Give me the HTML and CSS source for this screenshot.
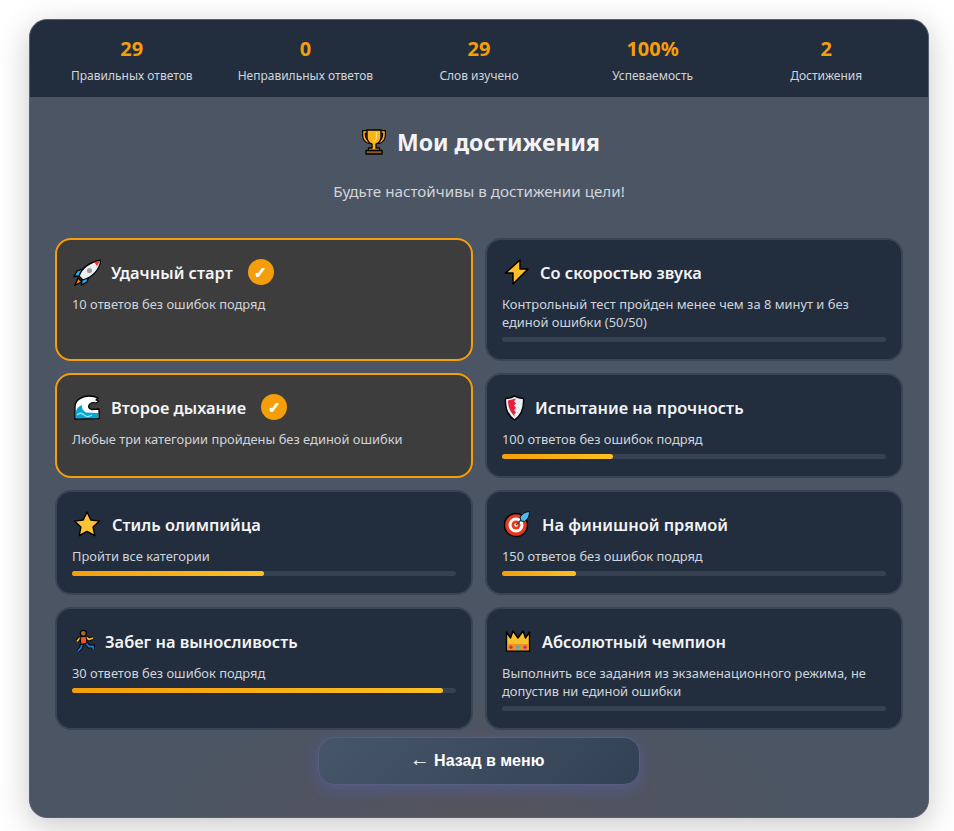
FILE: index.html
```html
<!DOCTYPE html>
<html lang="ru">
<head>
    <meta charset="UTF-8">
    <meta name="viewport" content="width=device-width, initial-scale=1.0">
    <title>Мои достижения</title>
    <link rel="stylesheet" href="styles.css">
</head>
<body>
    <div class="container">
        <div class="stats-bar">
            <div class="stat"><div class="stat-value">29</div><div class="stat-label">Правильных ответов</div></div>
            <div class="stat"><div class="stat-value">0</div><div class="stat-label">Неправильных ответов</div></div>
            <div class="stat"><div class="stat-value">29</div><div class="stat-label">Слов изучено</div></div>
            <div class="stat"><div class="stat-value">100%</div><div class="stat-label">Успеваемость</div></div>
            <div class="stat"><div class="stat-value">2</div><div class="stat-label">Достижения</div></div>
        </div>

        <main class="content">
            <h1 class="page-title">
                <svg class="title-icon" viewBox="0 0 26 26" width="26" height="26">
                    <path d="M7 3H3v3c0 4 2 6.500 6 7.500M19 3h4v3c0 4-2 6.500-6 7.500" fill="none" stroke="#000" stroke-width="3.800"/>
                    <path d="M7 3H3v3c0 4 2 6.500 6 7.500M19 3h4v3c0 4-2 6.500-6 7.500" fill="none" stroke="#f9a825" stroke-width="1.600"/>
                    <path d="M6 1h14v7c0 4-3.500 6.500-5 7.200V19h3.500v2.500h-11V19H11v-3.800C9.500 14.500 6 12 6 8z" fill="#fcb316" stroke="#000" stroke-width="1.300"/>
                    <path d="M15.500 3v5c0 2-1 3.500-2 5" fill="none" stroke="#ffe08a" stroke-width="1.300"/>
                    <path d="M5 21.500h16V25H5z" fill="#8d5a2b" stroke="#000" stroke-width="1.300"/>
                </svg>
                Мои достижения
            </h1>
            <p class="subtitle">Будьте настойчивы в достижении цели!</p>

            <div class="achievements">
                <div class="card completed">
                    <div class="card-head">
                        <svg class="icon" viewBox="0 0 29 28" width="29" height="28">
                            <path d="M6 20l-3 7 7-3z" fill="#f57c00" stroke="#000" stroke-width="1.300"/>
                            <path d="M11 11l-6 2-3 5.500 6-.5zM17 18l-2 6-5.500 3 .5-6z" fill="#1fb0f0" stroke="#000" stroke-width="1.300"/>
                            <path d="M7 18C10 10 18 4 29 2 27 13 20 19 11 22z" fill="#eceff1" stroke="#000" stroke-width="1.300"/>
                            <path d="M21 4.200c2 .6 3.300 2 3.800 4.300L28.200 2.800z" fill="#e53935"/>
                            <circle cx="17.500" cy="12.500" r="2.600" fill="#9e9e9e"/>
                        </svg>
                        <span class="card-title">Удачный старт</span>
                        <span class="check">✓</span>
                    </div>
                    <p class="card-desc">10 ответов без ошибок подряд</p>
                </div>

                <div class="card">
                    <div class="card-head">
                        <svg class="icon" viewBox="0 0 28 28" width="28" height="28">
                            <path d="M18 2L3.500 15H11V26L26 11H18z" fill="#fcbc2c" stroke="#000" stroke-width="1.500" stroke-linejoin="round"/>
                        </svg>
                        <span class="card-title">Со скоростью звука</span>
                    </div>
                    <p class="card-desc">Контрольный тест пройден менее чем за 8 минут и без единой ошибки (50/50)</p>
                    <div class="progress-bar"><div class="progress" style="width: 0%"></div></div>
                </div>

                <div class="card completed">
                    <div class="card-head">
                        <svg class="icon" viewBox="0 0 29 28" width="29" height="28">
                            <path d="M3 26V14C3 7 10 3 17 3c4 0 7 1 9 2l-2 2 3 1-3 2c-3-1-6 0-7 2s0 4 3 4.500l7-.5v9.500z" fill="#fff" stroke="#000" stroke-width="1.300" stroke-linejoin="round"/>
                            <path d="M4 18c1-3 3-5 6-6-.5 3 1 6 4 7.500L26 20v5.300H4z" fill="#05a6d3"/>
                            <path d="M5 22c3-3 5-2 7 0s5 2 8 0" fill="none" stroke="#8ee3f5" stroke-width="1.200"/>
                        </svg>
                        <span class="card-title">Второе дыхание</span>
                        <span class="check">✓</span>
                    </div>
                    <p class="card-desc">Любые три категории пройдены без единой ошибки</p>
                </div>

                <div class="card">
                    <div class="card-head">
                        <svg class="icon" viewBox="0 0 23 28" width="23" height="28">
                            <path d="M12.500 3c3 1.500 6 2.300 9 2.500.5 8-1 16-9 21.500-8-5.500-9.500-13.500-9-21.500 3-.2 6-1 9-2.500z" fill="#eceff1" stroke="#000" stroke-width="1.400"/>
                            <path d="M14 5.500L6 7.500c0 6 2 12 7.500 16.500l-1.500-2.500 2-2-2-2.500 2-2-2-2.500 2-2-2-2z" fill="#e81e3a"/>
                        </svg>
                        <span class="card-title">Испытание на прочность</span>
                    </div>
                    <p class="card-desc">100 ответов без ошибок подряд</p>
                    <div class="progress-bar"><div class="progress" style="width: 29%"></div></div>
                </div>

                <div class="card">
                    <div class="card-head">
                        <svg class="icon" viewBox="0 0 30 28" width="30" height="28">
                            <path d="M15 2l3.800 8 8.700 1.100-6.400 6 1.700 8.600-7.800-4.300-7.800 4.300 1.700-8.600-6.400-6L11.200 10z" fill="#ffc233" stroke="#000" stroke-width="1.400" stroke-linejoin="round"/>
                        </svg>
                        <span class="card-title">Стиль олимпийца</span>
                    </div>
                    <p class="card-desc">Пройти все категории</p>
                    <div class="progress-bar"><div class="progress" style="width: 50%"></div></div>
                </div>

                <div class="card">
                    <div class="card-head">
                        <svg class="icon" viewBox="0 0 30 28" width="30" height="28">
                            <circle cx="14" cy="15" r="11.500" fill="#e53a1e" stroke="#000" stroke-width="1.400"/>
                            <circle cx="14" cy="15" r="7.500" fill="#fff"/>
                            <circle cx="14" cy="15" r="4.500" fill="#e53a1e"/>
                            <circle cx="14" cy="15" r="1.800" fill="#fff"/>
                            <path d="M14 15L21 8" stroke="#37474f" stroke-width="1.400"/>
                            <path d="M18 7c2-3 5-5 9.500-5.500C27.500 6 26 9 22.500 11.500L19 11z" fill="#4fb8ef" stroke="#000" stroke-width=".8"/>
                        </svg>
                        <span class="card-title">На финишной прямой</span>
                    </div>
                    <p class="card-desc">150 ответов без ошибок подряд</p>
                    <div class="progress-bar"><div class="progress" style="width: 19.33%"></div></div>
                </div>

                <div class="card">
                    <div class="card-head">
                        <svg class="icon" viewBox="0 0 23 28" width="23" height="28">
                            <path d="M14 10l3 2.500 4-1.500M8 10.500l-3 4" fill="none" stroke="#000" stroke-width="3.600"/>
                            <path d="M14 10l3 2.500 4-1.500M8 10.500l-3 4" fill="none" stroke="#fbc02d" stroke-width="1.700"/>
                            <path d="M10 17l-1 4-3 3M14 16l3 3.500h4l.5 3" fill="none" stroke="#000" stroke-width="3.800"/>
                            <path d="M10 17l-1 4-3 3M14 16l3 3.500h4l.5 3" fill="none" stroke="#1e78d2" stroke-width="1.900"/>
                            <path d="M8 10l6-1 1 7-6 1.500z" fill="#ef5326" stroke="#000" stroke-width="1"/>
                            <circle cx="11.300" cy="6.300" r="3" fill="#a5672e" stroke="#000" stroke-width="1.200"/>
                        </svg>
                        <span class="card-title">Забег на выносливость</span>
                    </div>
                    <p class="card-desc">30 ответов без ошибок подряд</p>
                    <div class="progress-bar"><div class="progress" style="width: 96.67%"></div></div>
                </div>

                <div class="card">
                    <div class="card-head">
                        <svg class="icon" viewBox="0 0 30 28" width="30" height="28">
                            <path d="M4.500 5l4 6 2.500-7 5 7 5-7 2.500 7 4-6V24h-23z" fill="#fbc02d" stroke="#000" stroke-width="1.400" stroke-linejoin="round"/>
                            <rect x="5.200" y="17" width="21.600" height="6.300" fill="#e8951c"/>
                            <circle cx="9" cy="20.200" r="1.600" fill="#d81b8c"/>
                            <circle cx="16" cy="20.200" r="1.800" fill="#29b6f6"/>
                            <circle cx="23" cy="20.200" r="1.600" fill="#d81b8c"/>
                        </svg>
                        <span class="card-title">Абсолютный чемпион</span>
                    </div>
                    <p class="card-desc">Выполнить все задания из экзаменационного режима, не допустив ни единой ошибки</p>
                    <div class="progress-bar"><div class="progress" style="width: 0%"></div></div>
                </div>
            </div>

            <button type="button" class="btn-back"><span class="arrow">←</span> Назад в меню</button>
        </main>
    </div>
</body>
</html>
```

FILE: styles.css
```css
* {
    box-sizing: border-box;
}

body {
    margin: 0;
    padding: 19px 25px 13px 29px;
    background-color: #fff;
    font-family: "Noto Sans", "Open Sans", sans-serif;
    color: #f3f4f6;
}

.container {
    width: 900px;
    border: 1px solid #566072;
    border-radius: 18px;
    overflow: hidden;
    background: radial-gradient(ellipse 320px 120px at 50% 100%, #55545e, rgba(85, 84, 94, 0)), #4c5563;
    box-shadow: 0 8px 32px rgba(0, 0, 0, 0.22);
}

.stats-bar {
    display: grid;
    grid-template-columns: repeat(5, 1fr);
    height: 77px;
    padding: 15px 15px 0;
    background-color: #222d3e;
}

.stat {
    text-align: center;
}

.stat-value {
    font-size: 20px;
    line-height: 27px;
    font-weight: 700;
    color: #f59e0b;
}

.stat-label {
    margin-top: 6px;
    font-size: 12px;
    line-height: 16px;
    color: #d1d5db;
}

.content {
    padding: 26px 25px 32px;
}

.page-title {
    display: flex;
    justify-content: center;
    align-items: center;
    gap: 10px;
    margin: 0;
    padding-left: 3px;
    font-size: 23px;
    line-height: 38px;
    font-weight: 700;
}

.subtitle {
    margin: 20px 0 37px;
    text-align: center;
    font-size: 15.200px;
    line-height: 20px;
    color: #d1d5db;
}

.achievements {
    display: grid;
    grid-template-columns: 1fr 1fr;
    gap: 12px;
    margin-bottom: 7px;
}

.card {
    padding: 15px 15px 17px;
    border: 2px solid #394557;
    border-radius: 16px;
    background-color: #222d3e;
}

.card.completed {
    border-color: #f59e0b;
    background-color: #3d3d3d;
}

.card-head {
    display: flex;
    align-items: center;
    gap: 10px;
    height: 34px;
    margin-bottom: 6px;
}

.icon {
    flex: none;
}

.card-title {
    font-size: 16.400px;
    font-weight: 600;
}

.check {
    display: flex;
    justify-content: center;
    align-items: center;
    width: 26px;
    height: 26px;
    margin-left: 5px;
    border-radius: 50%;
    background-color: #f59e0b;
    font-size: 15px;
    font-weight: 700;
    color: #fff;
    -webkit-text-stroke: 0.5px #fff;
}

.card-desc {
    margin: 0;
    font-size: 12.900px;
    line-height: 18px;
    color: #d1d5db;
}

.progress-bar {
    height: 5px;
    margin-top: 6px;
    border-radius: 3px;
    background-color: #374151;
}

.progress {
    height: 100%;
    border-radius: 3px;
    background: linear-gradient(90deg, #f59e0b, #fbbf24);
}

.btn-back {
    display: block;
    width: 322px;
    height: 48px;
    margin: 0 auto;
    padding: 0 4px 2px 0;
    border: 1px solid #55607f;
    border-radius: 16px;
    background: linear-gradient(135deg, #475569, #334155);
    box-shadow: 0 4px 15px rgba(99, 102, 241, 0.3);
    font-family: "Liberation Sans", Arial, sans-serif;
    font-size: 16px;
    font-weight: 700;
    color: #fff;
}

.arrow {
    font-size: 20px;
    line-height: 16px;
    font-weight: 400;
}
```
